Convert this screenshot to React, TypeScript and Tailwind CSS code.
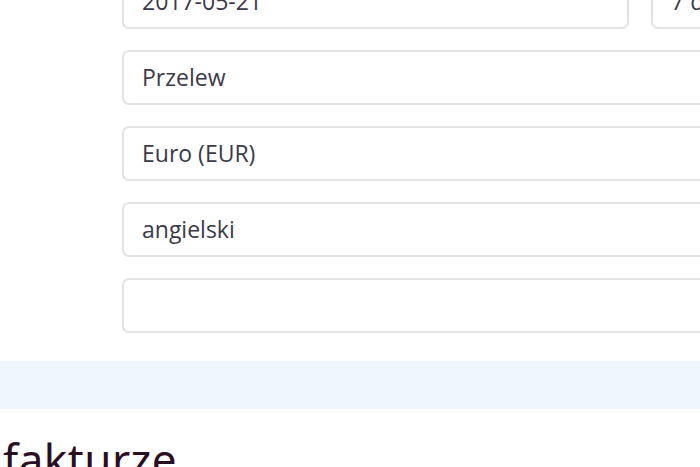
const field =
  'h-[55px] rounded-[7px] border-2 border-[#e3e3e3] bg-white px-[18px] flex items-center text-[23px] text-[#3a3a4a] whitespace-nowrap overflow-hidden'

function Field({ value, className = '' }: { value?: string; className?: string }) {
  return <div className={`${field} ${className}`}>{value}</div>
}

export default function App() {
  return (
    <div
      className="w-[700px] h-[467px] overflow-hidden bg-white"
      style={{ fontFamily: '"Open Sans", "Noto Sans", sans-serif' }}
    >
      <div className="pl-[122px] -mt-[26px] w-[900px] flex flex-col gap-[21px]">
        <div className="flex gap-[22px]">
          <Field value="2017-05-21" className="w-[507px] shrink-0" />
          <Field value="7 dni" className="w-[300px] shrink-0" />
        </div>
        <Field value="Przelew" />
        <Field value="Euro (EUR)" />
        <Field value="angielski" />
        <Field />
      </div>
      <div className="mt-[28px] h-[48px] bg-[#eff6fd]" />
      <h2
        className="mt-[28px] pl-[3px] text-[44px] leading-none tracking-[0.5px] text-[#2b0d24] whitespace-nowrap"
        style={{ fontFamily: '"Noto Sans", sans-serif' }}
      >
        fakturze
      </h2>
    </div>
  )
}
